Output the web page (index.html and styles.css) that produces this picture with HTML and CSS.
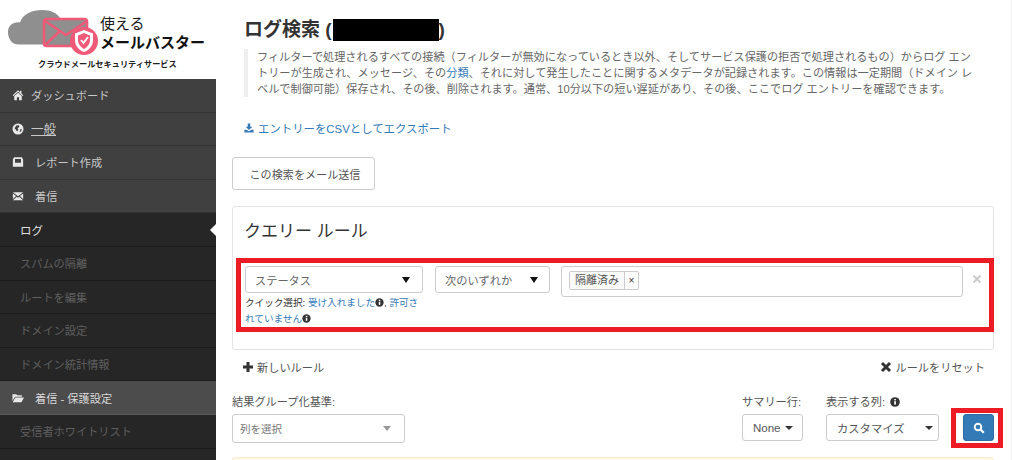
FILE: index.html
```html
<!DOCTYPE html>
<html lang="ja">
<head>
<meta charset="utf-8">
<title>ログ検索</title>
<link rel="stylesheet" href="styles.css">
</head>
<body>
<div class="app">
  <aside class="sidebar">
    <div class="logo">
      <div class="logo-top">
        <svg class="logo-mark" width="100" height="52" viewBox="0 0 100 52">
          <path fill="#8f8f8f" d="M19 37.5 C11 37.5 8 31 8 25 C8 18 14 14.5 20 15.5 C22 7.5 32 3 42 3 C51 3 58 6 61 13 L84 13 L84 37.5 Z"/>
          <rect x="44" y="12" width="43" height="27" rx="2.5" fill="#8f8f8f" stroke="#ee5a78" stroke-width="2.6"/>
          <path d="M45 14 L66 28 L87 14 M45 38 L60 24" fill="none" stroke="#ee5a78" stroke-width="2.6"/>
          <circle cx="84" cy="34" r="14" fill="#ee5a78"/>
          <path d="M84 23 L93 26.5 V33 C93 39 89 43 84 45 C79 43 75 39 75 33 V26.5 Z" fill="#fff"/>
          <path d="M84 26 L90 28.5 V33 C90 37 87.5 40 84 42 C80.5 40 78 37 78 33 V28.5 Z" fill="#ee5a78"/>
          <path d="M81 33 L83.5 36 L88 30" fill="none" stroke="#fff" stroke-width="1.8"/>
        </svg>
        <div class="logo-words">
          <div class="logo-small">使える</div>
          <div class="logo-big">メールバスター</div>
        </div>
      </div>
      <div class="logo-sub">クラウドメールセキュリティサービス</div>
    </div>
    <nav class="nav">
      <a class="item"><svg class="ni" viewBox="0 0 14 14"><path fill="currentColor" d="M7 1.5 L0.8 7.2 L1.7 8.1 L7 3.3 L12.3 8.1 L13.2 7.2 L11 5.2 V2 H9.4 V3.7 Z M2.6 8.2 V13 H5.7 V9.5 H8.3 V13 H11.4 V8.2 L7 4.3 Z"/></svg>ダッシュボード</a>
      <a class="item"><svg class="ni" viewBox="0 0 14 14"><circle cx="7" cy="7" r="6.4" fill="currentColor"/><path fill="#404040" d="M5 3 L8 2.6 L8.5 4.6 L6.5 6 L7.5 8 L6 10 L4.3 7.5 L3 6 Z M9.5 7.5 L11.5 7 L10.5 10 L9 10.5 Z"/></svg><span class="u">一般</span></a>
      <a class="item wide"><svg class="ni" viewBox="0 0 14 14"><path fill="currentColor" fill-rule="evenodd" d="M2.5 1.5 H11.5 L13 4 V12.5 H1 V4 Z M3.5 3.5 V8 H10.5 V3.5 Z"/></svg>レポート作成</a>
      <a class="item wide"><svg class="ni" viewBox="0 0 14 14"><path fill="currentColor" d="M1 2.5 H13 L7 7.4 Z M1 4 L4.8 7.1 L1 10.6 Z M13 4 L9.2 7.1 L13 10.6 Z M5.6 7.8 L7 8.9 L8.4 7.8 L13 12 H1 Z"/></svg>着信</a>
      <a class="sub active">ログ</a>
      <a class="sub">スパムの隔離</a>
      <a class="sub">ルートを編集</a>
      <a class="sub">ドメイン設定</a>
      <a class="sub">ドメイン統計情報</a>
      <a class="item wide open"><svg class="ni" viewBox="0 0 14 14"><path fill="currentColor" d="M0.5 2.5 H5 L6 3.8 H11.5 V5.5 H3.5 L0.5 10.5 Z M4 6.5 H14 L11 12 H0.8 Z"/></svg>着信 - 保護設定</a>
      <a class="sub">受信者ホワイトリスト</a>
      <a class="sub">ブロックリスト設定</a>
    </nav>
  </aside>

  <main class="main">
    <h1 class="title">ログ検索 (<span class="redact"></span>)</h1>
    <blockquote class="intro">
      フィルターで処理されるすべての接続（フィルターが無効になっているとき以外、そしてサービス保護の拒否で処理されるもの）からログ エン<br>
      トリーが生成され、メッセージ、その<a class="link">分類</a>、それに対して発生したことに関するメタデータが記録されます。この情報は一定期間（ドメイン レ<br>
      ベルで制御可能）保存され、その後、削除されます。通常、10分以下の短い遅延があり、その後、ここでログ エントリーを確認できます。
    </blockquote>
    <a class="export link">
      <svg class="ic" viewBox="0 0 12 12"><path fill="#337ab7" d="M4.5 0.5 H7.5 V4.5 H10 L6 8.5 L2 4.5 H4.5 Z M0.5 8.2 H3 L6 10 L9 8.2 H11.5 V11.5 H0.5 Z"/></svg>
      エントリーをCSVとしてエクスポート
    </a>
    <button class="mail-btn">この検索をメール送信</button>

    <section class="panel">
      <h2 class="panel-title">クエリー ルール</h2>
      <div class="rule">
        <div class="rule-field">
          <div class="sel sel-field"><span>ステータス</span><i class="tri"></i></div>
          <div class="quick">クイック選択: <a class="link">受け入れました</a><svg class="info" viewBox="0 0 10 10"><circle cx="5" cy="5" r="4.6" fill="#333"/><rect x="4.2" y="4.2" width="1.7" height="3.4" fill="#fff"/><rect x="4.2" y="2" width="1.7" height="1.4" fill="#fff"/></svg>, <a class="link">許可さ<br>れていません</a><svg class="info" viewBox="0 0 10 10"><circle cx="5" cy="5" r="4.6" fill="#333"/><rect x="4.2" y="4.2" width="1.7" height="3.4" fill="#fff"/><rect x="4.2" y="2" width="1.7" height="1.4" fill="#fff"/></svg></div>
        </div>
        <div class="sel sel-op"><span>次のいずれか</span><i class="tri"></i></div>
        <div class="tags"><span class="tag"><span class="tag-text">隔離済み</span><span class="tag-x">×</span></span></div>
        <svg class="rule-x" viewBox="0 0 10 10"><path d="M1.5 1.5 L8.5 8.5 M8.5 1.5 L1.5 8.5" stroke="#ccc" stroke-width="2"/></svg>
      </div>
      <div class="hl hl-rule"></div>
    </section>

    <div class="actions">
      <a class="act"><svg class="ic ic-act" viewBox="0 0 12 12"><path fill="#333" d="M4.5 1 H7.5 V4.5 H11 V7.5 H7.5 V11 H4.5 V7.5 H1 V4.5 H4.5 Z"/></svg>新しいルール</a>
      <a class="act"><svg class="ic ic-act" viewBox="0 0 12 12"><path d="M2 2 L10 10 M10 2 L2 10" stroke="#333" stroke-width="3"/></svg>ルールをリセット</a>
    </div>

    <div class="filters">
      <div class="fg fg-group">
        <label class="lbl">結果グループ化基準:</label>
        <div class="chosen"><span>列を選択</span><i class="caret caret-grey"></i></div>
      </div>
      <div class="fg fg-sum">
        <label class="lbl">サマリー行:</label>
        <div class="bs none-btn"><span>None</span><i class="caret"></i></div>
      </div>
      <div class="fg fg-col">
        <label class="lbl">表示する列: <svg class="info big" viewBox="0 0 10 10"><circle cx="5" cy="5" r="4.8" fill="#333"/><rect x="4.2" y="4.2" width="1.7" height="3.4" fill="#fff"/><rect x="4.2" y="2" width="1.7" height="1.4" fill="#fff"/></svg></label>
        <div class="bs custom-btn"><span>カスタマイズ</span><i class="caret"></i></div>
      </div>
      <div class="fg fg-go">
        <button class="go"><svg width="12" height="12" viewBox="0 0 12 12"><circle cx="5" cy="5" r="3.3" fill="none" stroke="#fff" stroke-width="1.9"/><path d="M7.5 7.5 L10.8 10.8" stroke="#fff" stroke-width="2.2"/></svg></button>
        <div class="hl hl-go"></div>
      </div>
    </div>
    <div class="alert"></div>
  </main>
</div>
</body>
</html>
```

FILE: styles.css
```css
* { box-sizing: border-box; }
html, body { margin: 0; height: 460px; overflow: hidden; background: #fff; }
body {
  font-family: "Liberation Sans", "Noto Sans CJK JP", sans-serif;
  font-size: 12px;
  color: #333;
  border-right: 1px solid #f0f0f0;
}
.app { display: flex; height: 460px; overflow: hidden; }
.sidebar { width: 216px; flex: none; background: #262626; }

.logo { height: 79px; background: #fff; padding-top: 7px; }
.logo-top { display: flex; align-items: flex-start; height: 52px; }
.logo-mark { flex: none; }
.logo-words { padding-top: 8px; color: #1a1a1a; white-space: nowrap; }
.logo-small { font-size: 15px; line-height: 18px; }
.logo-big { font-size: 15px; line-height: 20px; font-weight: 700; color: #111; }
.logo-sub { font-size: 8.2px; line-height: 11px; font-weight: 700; color: #222; margin: 0 0 0 38px; white-space: nowrap; }

.nav { display: flex; flex-direction: column; }
.item, .sub { display: flex; align-items: center; height: 33.6px; white-space: nowrap; font-size: 11.2px; }
.item { background: #404040; color: #c8c8c8; padding-left: 12px; border-bottom: 1px solid #333; }
.ni { width: 12px; height: 12px; margin-right: 7px; flex: none; color: #e8e8e8; }
.wide .ni { margin-right: 11px; }
.u { text-decoration: underline; font-size: 12.5px; }
.open { background: #4c4c4c; color: #d8d8d8; border-bottom: 1px solid #5a5a5a; }
.sub { background: #262626; color: #5f5f5f; padding-left: 20px; border-bottom: 1px solid #1c1c1c; position: relative; }
.active { color: #e0e0e0; font-size: 11.5px; }
.active::after {
  content: "";
  position: absolute;
  right: 0;
  top: 50%;
  margin-top: -6px;
  border: 6px solid transparent;
  border-right-color: #fff;
  border-left-width: 0;
}

.main { width: 762px; margin-left: 16px; flex: none; }
.title { margin: 18px 0 0 12px; font-size: 19px; line-height: 24px; font-weight: 700; color: #333; white-space: nowrap; display: flex; align-items: center; }
.redact { display: inline-block; width: 106px; height: 22px; background: #000; margin: 0 0 0 1px; }
.intro {
  margin: 7px 0 0 12px;
  padding: 0 0 0 9px;
  border-left: 4px solid #eee;
  font-size: 11.16px;
  line-height: 16px;
  color: #666;
  white-space: nowrap;
}
.link { color: #337ab7; }
.export { display: flex; align-items: center; margin: 23px 0 0 12px; height: 16px; font-size: 11.4px; white-space: nowrap; }
.ic { width: 10px; height: 10px; margin-right: 4px; flex: none; }
.ic-act { width: 12px; height: 12px; margin-right: 3px; }
.mail-btn {
  display: block;
  margin: 21px 0 0 0;
  width: 143px;
  height: 33px;
  background: #fff;
  border: 1px solid #ccc;
  border-radius: 3px;
  font: inherit;
  font-size: 11.1px;
  color: #555;
  padding: 0 0 0 3px;
}

.panel { position: relative; height: 144px; margin-top: 16px; border: 1px solid #e3e3e3; border-radius: 3px; padding: 0 12px; }
.panel-title { margin: 15px 0 0 -1px; font-size: 17px; line-height: 20px; font-weight: 400; color: #333; }
.rule { display: flex; align-items: flex-start; margin-top: 24px; }
.rule-field { width: 178px; flex: none; }
.sel { height: 27px; display: flex; align-items: center; justify-content: space-between; border: 1px solid #ccc; border-radius: 3px; color: #666; font-size: 11.2px; background: #fff; }
.sel-field { padding: 0 12px 0 9px; }
.sel-op { width: 115px; margin-left: 12px; padding: 0 11px 0 9px; flex: none; }
.tri { width: 0; height: 0; border: 4px solid transparent; border-top: 6px solid #111; border-bottom: 0; }
.quick { margin-top: 2px; font-size: 9.6px; line-height: 16px; color: #333; white-space: nowrap; }
.info { width: 9px; height: 9px; vertical-align: -1px; }
.info.big { width: 10px; height: 10px; margin-left: 2px; }
.tags { width: 402px; height: 31px; margin-left: 11px; flex: none; border: 1px solid #ccc; border-radius: 3px; padding: 4px 7px; }
.tag { display: inline-flex; height: 19px; border: 1px solid #ccc; border-radius: 2px; font-size: 11px; line-height: 17px; color: #555; background: #fff; }
.tag-text { padding: 0 5px; background: #fafafa; border-right: 1px solid #ccc; }
.tag-x { width: 13px; text-align: center; color: #333; font-size: 10px; }
.rule-x { width: 10px; height: 10px; margin: 8px 0 0 9px; flex: none; }

.hl { position: absolute; border: 5px solid #ed1c24; pointer-events: none; }
.hl-rule { left: 3px; top: 51px; width: 758px; height: 74px; }

.actions { display: flex; justify-content: space-between; margin: 9px 9px 0 10px; height: 16px; }
.act { display: flex; align-items: center; font-size: 11.2px; color: #555; white-space: nowrap; }

.filters { display: flex; align-items: flex-start; margin-top: 19px; height: 56px; }
.fg { flex: none; position: relative; }
.fg-group { width: 173px; }
.fg-sum { margin-left: 337px; width: 61px; }
.fg-col { margin-left: 23px; width: 113px; }
.fg-go { margin-left: 24px; width: 31px; padding-top: 20px; }
.lbl { display: block; height: 20px; font-size: 11.2px; line-height: 16px; color: #555; white-space: nowrap; }
.chosen { height: 29px; display: flex; align-items: center; justify-content: space-between; padding: 0 13px 0 7px; border: 1px solid #ccc; border-radius: 3px; font-size: 10.5px; color: #777; }
.caret { width: 0; height: 0; border: 4px solid transparent; border-top-color: #333; border-bottom: 0; }
.caret-grey { border-width: 4px 4px 0; border-top-color: #999; border-top-width: 5px; }
.bs { height: 27px; display: flex; align-items: center; justify-content: space-between; border: 1px solid #ccc; border-radius: 3px; font-size: 11.5px; color: #555; }
.none-btn { padding: 0 9px 0 10px; }
.custom-btn { padding: 0 5px 0 10px; font-size: 11.3px; }
.go { display: flex; align-items: center; justify-content: center; width: 31px; height: 27px; border: 1px solid #2e6da4; border-radius: 3px; background: #337ab7; padding: 0; }
.hl-go { left: -12px; top: 14px; width: 52px; height: 40px; }
.alert { height: 20px; margin-top: 7px; background: #fcf8e3; border: 1px solid #faebcc; border-radius: 3px; }
```
